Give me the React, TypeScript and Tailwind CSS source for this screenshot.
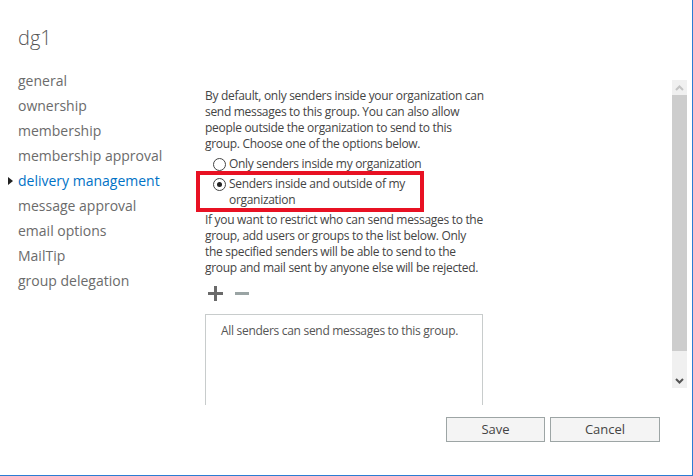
import React, { useState } from 'react';

const navItems = [
  'general',
  'ownership',
  'membership',
  'membership approval',
  'delivery management',
  'message approval',
  'email options',
  'MailTip',
  'group delegation',
];

const Radio: React.FC<{ checked: boolean }> = ({ checked }) => (
  <span className="mt-[2px] flex h-[13px] w-[13px] shrink-0 items-center justify-center rounded-full border border-[#444] bg-white">
    {checked && <span className="h-[5px] w-[5px] rounded-full bg-[#222]" />}
  </span>
);

export default function App() {
  const [selected, setSelected] = useState('delivery management');
  const [allowOutside, setAllowOutside] = useState(true);

  return (
    <div
      className="flex h-[476px] w-[693px] flex-col border-b border-r border-[#2b7cd3] bg-white text-[#444]"
      style={{ fontFamily: '"Open Sans", "Noto Sans", sans-serif' }}
    >
      <div className="pl-[18px] pt-[25px] text-[20px] leading-[26px] font-light text-[#555]">dg1</div>

      <div className="mt-[17px] flex">
        {/* left nav */}
        <ul className="w-[190px] shrink-0">
          {navItems.map((item) => {
            const active = item === selected;
            return (
              <li
                key={item}
                onClick={() => setSelected(item)}
                className={`relative h-[25px] cursor-pointer pl-[18px] text-[14px] leading-[25px] ${
                  active ? 'text-[#0072c6]' : 'text-[#6b6b6b]'
                }`}
              >
                {active && (
                  <span className="absolute left-[8px] top-[9px] h-0 w-0 border-y-[4px] border-l-[5px] border-y-transparent border-l-[#222]" />
                )}
                {item}
              </li>
            );
          })}
        </ul>

        {/* scroll pane */}
        <div className="mt-[12px] flex h-[325px] flex-1 pr-[5px]">
          <div className="flex-1 overflow-hidden whitespace-nowrap pl-[15px] pt-[8px] text-[12px] leading-[16px] tracking-[-0.3px] text-[#444]">
            <p>
              By default, only senders inside your organization can
              <br />
              send messages to this group. You can also allow
              <br />
              people outside the organization to send to this
              <br />
              group. Choose one of the options below.
            </p>

            <label
              className="mt-[4px] flex cursor-pointer items-start gap-[3px] pl-[8px]"
              onClick={() => setAllowOutside(false)}
            >
              <Radio checked={!allowOutside} />
              <span>Only senders inside my organization</span>
            </label>

            <div className="ml-[-9px] mt-[-1px] w-[228px] border-[4px] border-[#e81123] pl-[13px] pt-[1px]">
              <label className="flex cursor-pointer items-start gap-[3px]" onClick={() => setAllowOutside(true)}>
                <Radio checked={allowOutside} />
                <span>
                  Senders inside and outside of my
                  <br />
                  organization
                </span>
              </label>
            </div>

            <p>
              If you want to restrict who can send messages to the
              <br />
              group, add users or groups to the list below. Only
              <br />
              the specified senders will be able to send to the
              <br />
              group and mail sent by anyone else will be rejected.
            </p>

            <div className="mt-[10px] flex items-center gap-[12px] pl-[3px]">
              <svg width="15" height="15" viewBox="0 0 15 15">
                <rect x="6" y="0" width="3" height="15" fill="#6a6a6a" />
                <rect x="0" y="6" width="15" height="3" fill="#6a6a6a" />
              </svg>
              <svg width="14" height="15" viewBox="0 0 14 15">
                <rect x="0" y="6" width="14" height="3" fill="#9aa4a4" />
              </svg>
            </div>

            <div className="mt-[13px] h-[140px] w-[278px] border border-[#c8cccc] px-[15px] pt-[8px] text-[#555]">
              All senders can send messages to this group.
            </div>
          </div>

          {/* scrollbar */}
          <div className="flex h-[308px] w-[15px] shrink-0 flex-col bg-[#f0f0f0]">
            <div className="flex h-[15px] items-center justify-center">
              <svg width="9" height="6" viewBox="0 0 9 6">
                <path d="M1 5 L4.5 1.5 L8 5" stroke="#c4c4c4" strokeWidth="2" fill="none" />
              </svg>
            </div>
            <div className="h-[256px] bg-[#cdcdcd]" />
            <div className="flex-1" />
            <div className="flex h-[15px] items-center justify-center">
              <svg width="9" height="6" viewBox="0 0 9 6">
                <path d="M1 1 L4.5 4.5 L8 1" stroke="#555" strokeWidth="2" fill="none" />
              </svg>
            </div>
          </div>
        </div>
      </div>

      <div className="mt-[12px] flex justify-end gap-[5px] pr-[32px]">
        <button className="h-[25px] w-[99px] border border-[#9da5a5] bg-[#f4f4f4] text-[13px] text-[#444]">Save</button>
        <button className="h-[25px] w-[110px] border border-[#9da5a5] bg-[#f4f4f4] text-[13px] text-[#444]">Cancel</button>
      </div>
    </div>
  );
}
